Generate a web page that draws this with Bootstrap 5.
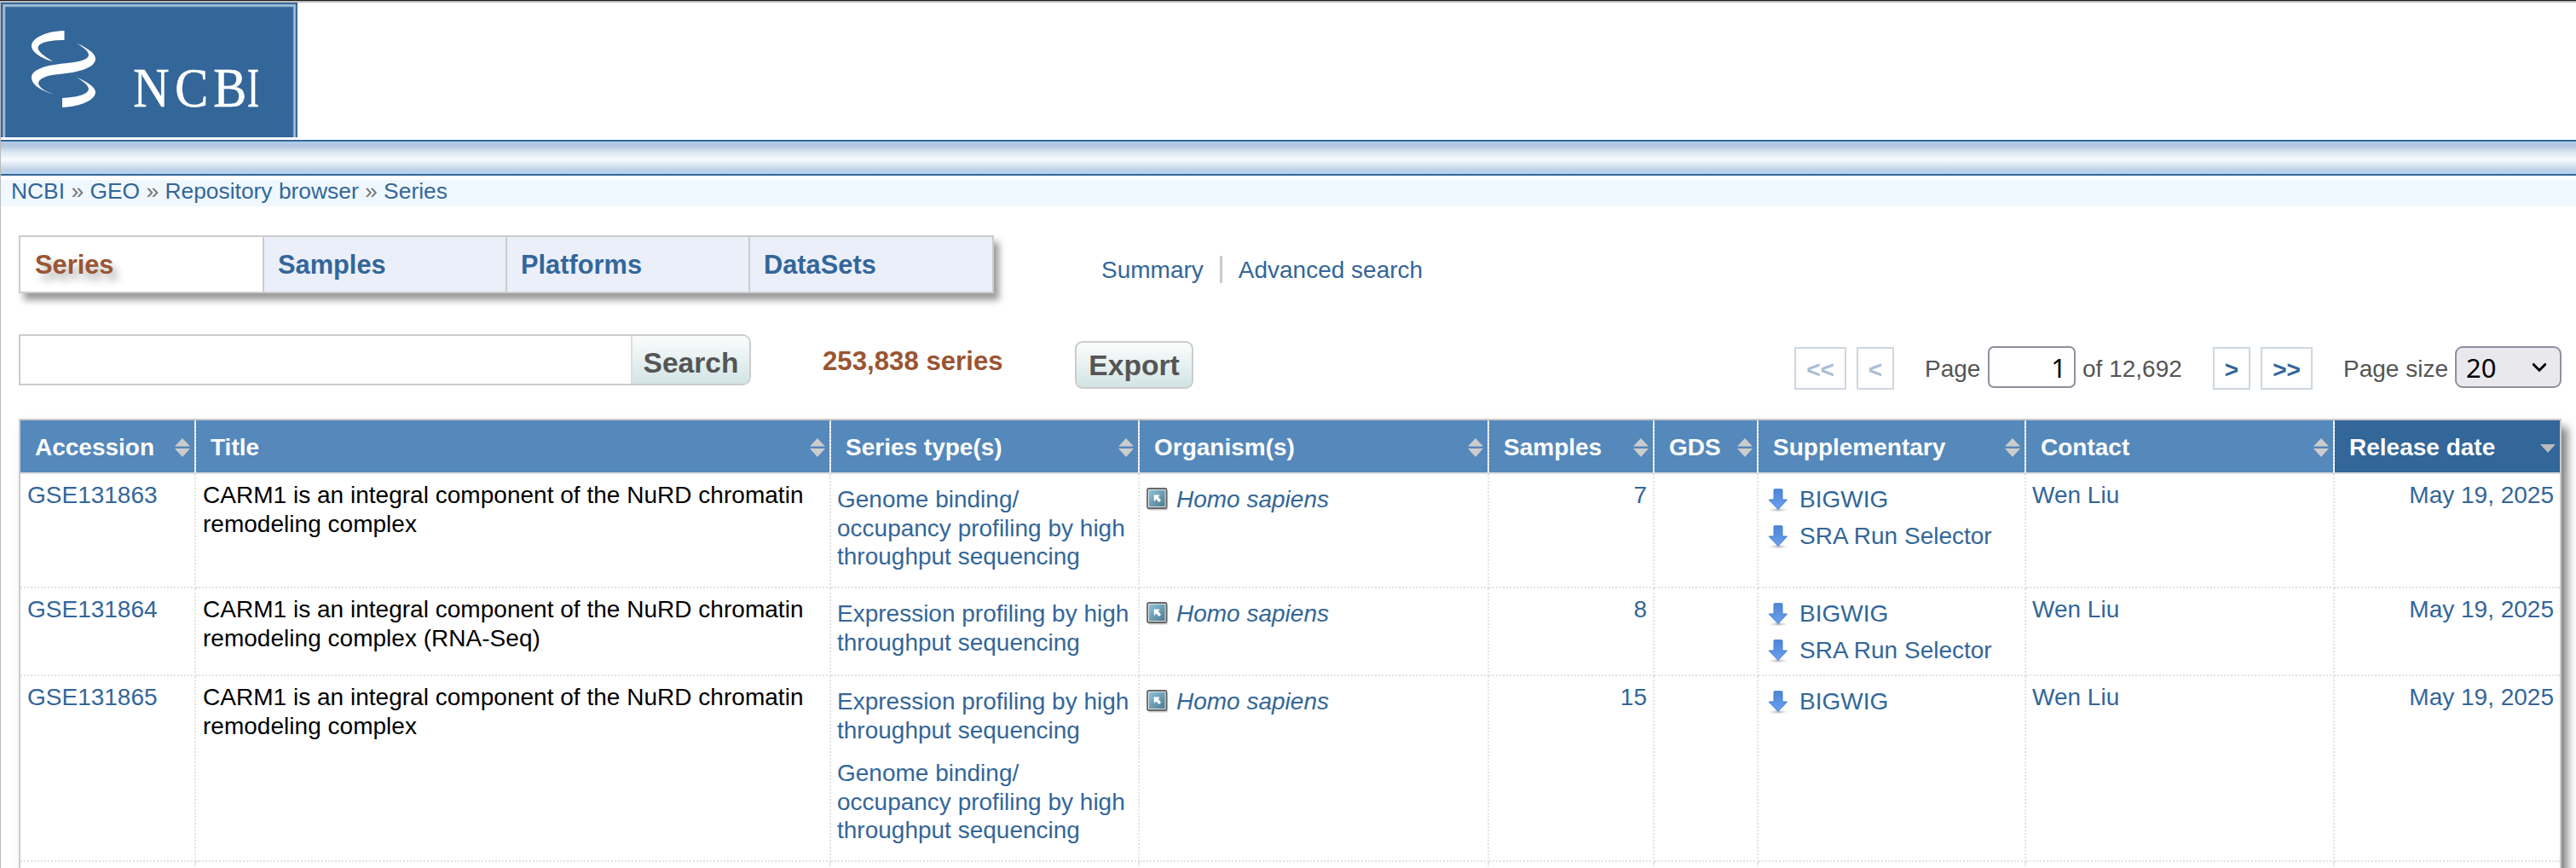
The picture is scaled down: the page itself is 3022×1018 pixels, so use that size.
<!DOCTYPE html>
<html lang="en">
<head>
<meta charset="utf-8">
<title>GEO Repository browser - Series</title>
<link href="https://cdn.jsdelivr.net/npm/bootstrap@5.3.0/dist/css/bootstrap.min.css" rel="stylesheet">
<style>
body{font:28px/33.6px "Liberation Sans",Arial,sans-serif;color:#555;background:#fff;overflow:hidden}
a{color:#369;text-decoration:none}
.page{height:1018px;border-top:1px solid #1a1a1a}
.page-in{height:1017px;border-top:2px solid #bbb;border-left:1px solid #bbb}
.logo{display:block;margin-bottom:3px}
.strip{height:42px;border-top:2px solid #369;border-bottom:2px solid #369;background:linear-gradient(#b4d0ec 0,#b0cae6 5%,#b0c5de 12%,#dae5f1 32%,#f6fbff 55%,#dce7f2 72%,#bdd0e6 88%,#b8d3ee 96%)}
.crumbs{margin-top:5px;height:31px;padding-left:12px;font-size:26.4px;line-height:27px;background:#f0f8ff;color:#777}
.main{padding:34px 17px 0 21px}
.tabs{width:1144px;height:68px;border:2px solid #ccc;box-shadow:6px 8px 8px rgba(0,0,0,.4)}
.tabs a{width:285px;padding:16px 0 0 16px;font-weight:bold;font-size:30.8px;background:#ebeffa;border-left:2px solid #ccc}
.tabs a:first-child{width:284px;padding-left:17px;background:#fff;border-left:0;color:#953;text-shadow:6px 8px 8px rgba(0,0,0,.3)}
.tabs a:last-child{flex-grow:1}
.views{padding:24px 0 0 126px}
.views a+a{border-left:3px solid #ccc;margin-left:19px;padding-left:19px;height:32px}
.tools{padding-top:48px;height:147px}
.find{width:859px;height:60px;border:2px solid #ccc;border-radius:0 10px 10px 0;overflow:hidden}
.find input{border:0;outline:0;min-width:0}
.push{font:bold 33.6px "Liberation Sans",Arial,sans-serif;color:#555;background:linear-gradient(#fcfdfd,#d1e4e4);border:0;padding:0}
.find .push{width:139px;border-left:2px solid #ddd;padding-top:8px}
.count{font-weight:bold;font-size:31.2px;color:#953;margin:15px 0 0 84px;width:296px;white-space:nowrap}
.export{width:139px;height:56px;border:2px solid #ccc;border-radius:9px;margin-top:8px;padding-top:2px}
.pager{margin-top:14px;white-space:nowrap}
.pg{border:2px solid #ced7e0;height:50px;font-weight:bold;padding:8px 0;text-align:center;margin-top:1px}
.pg.off{color:#a9bed3}
.pager span{padding-top:10px}
.num{width:103px;height:49px;border:2px solid #8f8f9d;border-radius:7px;font:31px "Noto Sans",sans-serif;color:#000;text-align:right;padding:0 9px}
.size{width:125px;height:49px;border:2px solid #8f8f9d;border-radius:9px;background:#e9e9ed;font:31px/44px "Noto Sans",sans-serif;color:#000;padding:0 15px 0 11px}
.grid-box{width:2983px;border:2px solid #ccc;border-bottom:0;box-shadow:7px 10px 10px rgba(0,0,0,.5);height:540px;overflow:hidden}
.series{width:2979px;table-layout:fixed;border-collapse:separate;border-spacing:0}
.series th{height:63px;background:#58b;color:#fff;padding:2px 5px 0 17px;border-right:2px dotted #ddd;border-bottom:2px solid #ddd;vertical-align:middle;white-space:nowrap}
.series th:not(:last-child){background:linear-gradient(#58b,#58b) padding-box,#fff}
.series th:last-child{background:#369;border-right:0}
.series td{padding:8px 7px 0;vertical-align:top;border-right:2px dotted #e2e2e2;border-bottom:2px dotted #e2e2e2}
.series td:last-child{border-right:0}
.series td:nth-child(-n+2){padding-left:8px}
.series td.t{color:#000;letter-spacing:.02px}
.series td.low{padding-top:13px}
.series .gap{margin-top:16.8px}
.series .up{height:43px;padding-left:4px}
.series .up svg{margin-right:13px}
.r1{height:134px}.r2{height:103px}.r3{height:218px}.r4{height:60px}
svg{flex:none}
</style>
</head>
<body>
<svg width="0" height="0" class="position-absolute">
<defs>
<linearGradient id="gb" x1="0" y1="0" x2="1" y2="1"><stop offset="0" stop-color="#8cc3da"/><stop offset="1" stop-color="#4d7b90"/></linearGradient>
<linearGradient id="ga" x1="0" y1="0" x2="0" y2="1"><stop offset="0" stop-color="#4d86d6"/><stop offset="1" stop-color="#6ba0ee"/></linearGradient>
<radialGradient id="gs"><stop offset="0" stop-color="#999" stop-opacity=".8"/><stop offset="1" stop-color="#ccc" stop-opacity="0"/></radialGradient>
<symbol id="sort" viewBox="0 0 18 22"><path d="M9 0L18 9.5H0ZM0 12H18L9 22Z" fill="#ccc"/></symbol>
<symbol id="down" viewBox="0 0 18 22"><path d="M0 7H18L9 17Z" fill="#bbb"/></symbol>
<symbol id="arr" viewBox="0 0 24 28"><ellipse cx="12" cy="25" rx="12" ry="2.6" fill="url(#gs)"/><path d="M7 1.5Q7 .7 8 .7H16Q17 .7 17 1.5V13H22.5L12 24.5L1 13H7Z" fill="url(#ga)" stroke="#4580d4"/></symbol>
<symbol id="tax" viewBox="0 0 26 27"><rect x="2" y="3" width="23" height="23.5" rx="2" fill="#ccc"/><rect x="1" y="1" width="22.5" height="23" rx="1.5" fill="#d8e2e4" stroke="#666" stroke-width="1.8"/><rect x="3" y="3" width="18.5" height="19" fill="url(#gb)"/><path d="M8.500 8.500H15.500L14 11L17 15L14.500 17L11.500 13.500L9 16Z" fill="#fff"/></symbol>
</defs>
</svg>
<div class="page"><div class="page-in">
<header>
<svg class="logo" width="348" height="158" viewBox="1 3 348 158"><path fill="#369" d="M1 3H349V161H1Z"/><path d="M4.700 162V6.500H345.500V162" fill="none" stroke="#7c9fc0" stroke-width="3.400"/><path d="M4.700 162V6.500H345.500V162" fill="none" stroke="#b0c8da" stroke-width="1.400"/>
<g fill="#fff"><path d="M75.500 36C50 37 37 46 37 54C37 62 52 70 62 72C52 66 45 61 44.500 56C45 50 58 47 75.500 47Z"/><path d="M86 49C98 54 112 61 112 69C112 80 90 85 70 87C55 88 45 92 45 98C46 103 55 108 62 110C50 107 37 100 37 91C37 82 52 77 70 75C90 73 104 71 104 64C103 59 95 53 86 49Z"/><path d="M86 89C98 94 112 101 112 108C112 117 95 125 73 126V115C90 114 104 111 104 104C103 99 95 93 86 89Z"/>
<g font-family="Liberation Serif,serif" font-size="65" stroke="#fff" stroke-width=".6"><text transform="scale(.9 1)" y="125"><tspan x="173.500">N</tspan><tspan x="228">C</tspan><tspan x="278">B</tspan></text><text transform="scale(.65 1)" x="446" y="125">I</text></g></g></svg>
<div class="strip"></div>
</header>
<nav class="crumbs"><a href="#">NCBI</a> » <a href="#">GEO</a> » <a href="#">Repository browser</a> » <a href="#">Series</a></nav>
<main class="main">
<div class="d-flex">
<nav class="tabs d-flex"><a href="#">Series</a><a href="#">Samples</a><a href="#">Platforms</a><a href="#">DataSets</a></nav>
<nav class="views d-flex"><a href="#">Summary</a><a href="#">Advanced search</a></nav>
</div>
<div class="tools d-flex align-items-start">
<form class="find d-flex"><input type="text" class="flex-grow-1" aria-label="Search"><button type="button" class="push">Search</button></form>
<div class="count">253,838 series</div>
<button type="button" class="push export">Export</button>
<div class="pager d-flex ms-auto align-items-start">
<a class="pg off" href="#" style="width:61px">&lt;&lt;</a><a class="pg off" href="#" style="width:44px;margin-left:12px">&lt;</a>
<span style="width:74px;margin-left:36px">Page</span><input class="num" value="1" aria-label="Page"><span style="width:161px;padding-left:8px">of 12,692</span>
<a class="pg" href="#" style="width:44px">&gt;</a><a class="pg" href="#" style="width:61px;margin-left:12px">&gt;&gt;</a>
<span style="width:131px;margin-left:36px">Page size</span>
<div class="size d-flex justify-content-between align-items-center">20<svg width="18" height="12" viewBox="0 0 20 13"><path d="M2.500 2.500L10 10L17.500 2.500" fill="none" stroke="#000" stroke-width="3.200" stroke-linecap="round"/></svg></div>
</div>
</div>
<div class="grid-box">
<table class="series">
<colgroup><col style="width:206px"><col style="width:745px"><col style="width:362px"><col style="width:410px"><col style="width:194px"><col style="width:122px"><col style="width:314px"><col style="width:362px"><col style="width:264px"></colgroup>
<thead><tr id="heads"></tr></thead>
<tbody id="rows"></tbody>
</table>
</div>
</main>
</div></div>
<script>
const heads=['Accession','Title','Series type(s)','Organism(s)','Samples','GDS','Supplementary','Contact','Release date'];
document.getElementById('heads').innerHTML=heads.map((h,i)=>`<th><div class="d-flex justify-content-between align-items-center">${h}<svg width="18" height="22"><use href="#${i==8?'down':'sort'}"/></svg></div></th>`).join('');
const E='Expression profiling by high throughput sequencing',G='Genome binding/<br>occupancy profiling by high throughput sequencing',C='CARM1 is an integral component of the NuRD chromatin remodeling complex';
const data=[['GSE131863',C,[G],7,['BIGWIG','SRA Run Selector']],['GSE131864',C+' (RNA-Seq)',[E],8,['BIGWIG','SRA Run Selector']],['GSE131865',C,[E,G],15,['BIGWIG']]];
document.getElementById('rows').innerHTML=data.map((r,i)=>`<tr class="r${i+1}"><td><a href="#">${r[0]}</a></td><td class="t">${r[1]}</td>
<td class="low pe-0">${r[2].map((s,k)=>`<div class="${k?'gap':''}"><a href="#">${s}</a></div>`).join('')}</td>
<td class="low"><div class="d-flex"><svg width="26" height="27" style="margin:3px 9px 0 1px"><use href="#tax"/></svg><a href="#"><i>Homo sapiens</i></a></div></td>
<td class="text-end"><a href="#">${r[3]}</a></td><td></td>
<td class="low">${r[4].map(s=>`<div class="up d-flex"><svg class="mt-1" width="24" height="28"><use href="#arr"/></svg><a href="#">${s}</a></div>`).join('')}</td>
<td><a href="#">Wen Liu</a></td><td class="text-end"><a href="#">May 19, 2025</a></td></tr>`).join('')+'<tr class="r4">'+'<td></td>'.repeat(9)+'</tr>';
</script>
<script src="https://cdn.jsdelivr.net/npm/bootstrap@5.3.0/dist/js/bootstrap.bundle.min.js"></script>
</body>
</html>
